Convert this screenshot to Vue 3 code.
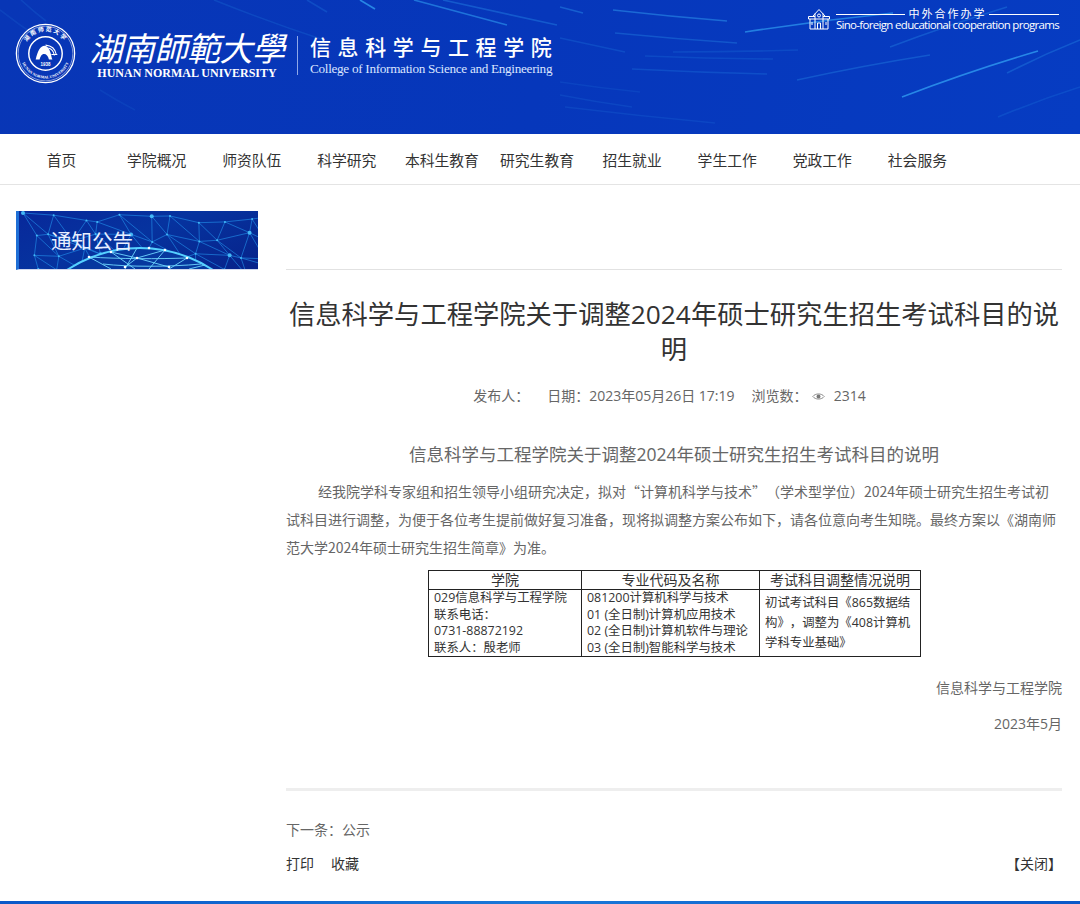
<script setup>
const navItems = ['首页', '学院概况', '师资队伍', '科学研究', '本科生教育', '研究生教育', '招生就业', '学生工作', '党政工作', '社会服务']

// light trails in the header: x1, y1, x2, y2, bend, opacity
const trails = [
  [560, 7, 583, 13, 0, 0.4], [613, 10, 727, 21, 1, 0.5], [745, 32, 893, 13, -2, 0.7],
  [615, 33, 737, 43, 1, 0.3], [560, 38, 625, 52, 0, 0.2], [673, 52, 798, 50, 1, 0.18],
  [645, 56, 773, 59, 1, 0.18], [632, 69, 767, 74, 1, 0.22], [797, 80, 930, 55, -2, 0.3],
  [902, 97, 1038, 51, -3, 0.8], [890, 47, 1007, 7, -2, 0.3], [1007, 73, 1080, 40, -2, 0.3],
  [998, 117, 1080, 87, -2, 0.18], [560, 95, 632, 107, 1, 0.14], [565, 107, 715, 123, 1, 0.14],
  [360, 0, 375, 9, 0, 0.8], [414, 0, 507, 25, 0, 0.6], [443, 0, 557, 25, 0, 0.35],
  [214, 0, 321, 39, 2, 0.18], [307, 0, 327, 12, 0, 0.22], [21, 0, 46, 21, 1, 0.15],
  [0, 10, 36, 36, 1, 0.12], [100, 90, 135, 110, 1, 0.1], [560, 82, 640, 92, 1, 0.12]
]
const trailPaths = trails.map(([x1, y1, x2, y2, b, o]) => ({
  d: `M${x1} ${y1} Q${(x1 + x2) / 2} ${(y1 + y2) / 2 + b} ${x2} ${y2}`,
  o
}))

// mesh of the notice banner, a jittered grid so the points look scattered
const cols = 11
const rows = 4
const nodes = []
for (let r = 0; r < rows; r++) {
  for (let c = 0; c < cols; c++) {
    const a = Math.sin(r * 12.9 + c * 78.2) * 4375.5
    const b = Math.sin(r * 39.3 + c * 11.1) * 2731.7
    nodes.push({
      x: c * 24 + 4 + (a - Math.floor(a)) * 16,
      y: r * 17 + 2 + (b - Math.floor(b)) * 12
    })
  }
}
const links = []
nodes.forEach((n, i) => {
  const right = (i + 1) % cols !== 0 ? nodes[i + 1] : null
  const down = nodes[i + cols]
  const diag = (i + 1) % cols !== 0 ? nodes[i + cols + 1] : null
  ;[right, down, diag].forEach((m) => {
    if (m) links.push({ x1: n.x, y1: n.y, x2: m.x, y2: m.y })
  })
})

// bright points on the globe
const globeDots = [[92, 41], [118, 47], [146, 39], [106, 56], [150, 56], [70, 46], [168, 47], [130, 37]]
</script>

<template>
  <div class="page">
    <header class="top">
      <svg class="trails" viewBox="0 0 1080 134">
        <path v-for="t in trailPaths" :key="t.d" :d="t.d" :opacity="t.o" stroke="#2f9bf0" stroke-width="1.6" fill="none" />
      </svg>
      <div class="brand">
        <svg class="seal" viewBox="0 0 62 62">
          <defs>
            <path id="ring-top" d="M8.5 31 A22.5 22.5 0 0 1 53.5 31" />
            <path id="ring-bottom" d="M5.5 31 A25.5 25.5 0 0 0 56.5 31" />
          </defs>
          <circle cx="31" cy="31" r="29.6" fill="none" stroke="#fff" stroke-width="1.3" />
          <circle cx="31" cy="31" r="27.8" fill="none" stroke="#fff" stroke-width="0.5" />
          <circle cx="31" cy="31" r="17" fill="none" stroke="#fff" stroke-width="1.5" />
          <text class="ring-cn"><textPath href="#ring-top" startOffset="50%" text-anchor="middle">湖南师范大学</textPath></text>
          <text class="ring-en"><textPath href="#ring-bottom" startOffset="50%" text-anchor="middle">HUNAN NORMAL UNIVERSITY</textPath></text>
          <path d="M21 37 C23 28 26 23 30 23 C33 23 35 26 36 30 C37 33 37 35 38 37 L34.5 37 C33.5 33.5 32 31.5 29.5 31.5 C27 31.5 26 34 25 37 Z" fill="#fff" />
          <path d="M31 22.5 C37 23 41 27 42 32 M34 25.5 C37.5 26.5 39.5 29.5 40 33 M37 32 L43 32" fill="none" stroke="#fff" stroke-width="1.1" />
          <text x="31" y="43.5" class="seal-year" text-anchor="middle">1938</text>
        </svg>
        <div class="school">
          <div class="school-cn">湖南師範大學</div>
          <div class="school-en">HUNAN NORMAL UNIVERSITY</div>
        </div>
        <div class="divider"></div>
        <div class="college">
          <div class="college-cn">信息科学与工程学院</div>
          <div class="college-en">College of Information Science and Engineering</div>
        </div>
      </div>
      <div class="sino">
        <svg class="sino-icon" viewBox="0 0 24 22" fill="none" stroke="#fff" stroke-width="1">
          <path d="M6 8 L12 1.5 L18 8" />
          <path d="M1.5 8.5 H8 M16 8.5 H22.5 M1.5 8.5 V11 H22.5 V8.5" />
          <path d="M3 11 V21 H21 V11 M8 5.5 V21 M16 5.5 V21" />
          <circle cx="12" cy="7.5" r="1.5" />
          <path d="M10.5 21 V15 H13.5 V21 M5 14 V17 M19 14 V17" />
        </svg>
        <div>
          <div class="sino-cn"><i></i><span>中外合作办学</span><i></i></div>
          <div class="sino-en">Sino-foreign educational cooperation programs</div>
        </div>
      </div>
    </header>

    <nav class="nav">
      <a v-for="item in navItems" :key="item">{{ item }}</a>
    </nav>

    <div class="body">
      <aside class="side">
        <div class="notice">
          <svg class="mesh" viewBox="0 0 239 58">
            <line v-for="(l, i) in links" :key="i" v-bind="l" stroke="#2494ee" stroke-width="0.6" />
            <circle v-for="(n, i) in nodes" :key="'n' + i" :cx="n.x" :cy="n.y" :r="i % 5 === 0 ? 2 : 1" fill="#44b8f6" />
            <circle cx="121" cy="169" r="132" fill="#06389f" stroke="#55d0ff" stroke-width="2" />
            <path d="M70 46 L92 58 M92 41 L116 58 M118 37 L106 58 M146 39 L130 58 M168 47 L150 58 M186 54 L170 58 M70 46 C100 48 140 48 168 47 M84 53 C110 56 150 56 182 53 M92 41 L118 47 L146 39 M118 47 L150 56 M118 47 L106 56" stroke="#6fd8ff" stroke-width="0.9" fill="none" />
            <circle v-for="d in globeDots" :key="d[0]" :cx="d[0]" :cy="d[1]" r="1.3" fill="#fff" />
          </svg>
          <span>通知公告</span>
        </div>
      </aside>

      <main class="main">
        <h1>信息科学与工程学院关于调整2024年硕士研究生招生考试科目的说明</h1>
        <div class="meta">
          <span class="publisher">发布人：</span>
          <span>日期：2023年05月26日 17:19</span>
          <span class="views">浏览数：
            <svg class="eye" viewBox="0 0 16 10">
              <path d="M1 5 C4 0.8 12 0.8 15 5 C12 9.2 4 9.2 1 5 Z" fill="none" stroke="#777" stroke-width="1" />
              <circle cx="8" cy="5" r="2.4" fill="#777" />
            </svg>
            2314</span>
        </div>

        <h2>信息科学与工程学院关于调整2024年硕士研究生招生考试科目的说明</h2>
        <p class="para">经我院学科专家组和招生领导小组研究决定，拟对“计算机科学与技术”（学术型学位）2024年硕士研究生招生考试初试科目进行调整，为便于各位考生提前做好复习准备，现将拟调整方案公布如下，请各位意向考生知晓。最终方案以《湖南师范大学2024年硕士研究生招生简章》为准。</p>

        <table class="tbl">
          <thead>
            <tr>
              <th class="c1">学院</th>
              <th class="c2">专业代码及名称</th>
              <th class="c3">考试科目调整情况说明</th>
            </tr>
          </thead>
          <tbody>
            <tr>
              <td>029信息科学与工程学院<br />联系电话：<br />0731-88872192<br />联系人：殷老师</td>
              <td>081200计算机科学与技术<br />01 (全日制)计算机应用技术<br />02 (全日制)计算机软件与理论<br />03 (全日制)智能科学与技术</td>
              <td class="note">初试考试科目《865数据结构》，调整为《408计算机学科专业基础》</td>
            </tr>
          </tbody>
        </table>

        <p class="sign first">信息科学与工程学院</p>
        <p class="sign">2023年5月</p>

        <div class="next">下一条：公示</div>
        <div class="actions">
          <div><a>打印</a><a class="fav">收藏</a></div>
          <a class="close">【关闭】</a>
        </div>
      </main>
    </div>
    <div class="bottom"></div>
  </div>
</template>

<style>
html, body {
  margin: 0;
  background: #fff;
}
</style>

<style scoped>
.page {
  width: 1080px;
  height: 904px;
  overflow: hidden;
  font-family: "Open Sans", "Noto Sans CJK SC", sans-serif;
  text-spacing-trim: space-all;
  color: #333;
  display: flex;
  flex-direction: column;
}

/* HEADER */
.top {
  height: 134px;
  flex: none;
  position: relative;
  overflow: hidden;
  background: linear-gradient(100deg, #0836b6 0%, #0637bb 50%, #063cc2 100%);
  color: #fff;
  display: flex;
  justify-content: space-between;
  align-items: flex-start;
}

.trails {
  position: absolute;
  inset: 0;
  width: 100%;
  height: 100%;
  filter: blur(0.6px);
}

.brand {
  position: relative;
  display: flex;
  align-items: center;
  margin: 23px 0 0 15px;
}

.seal {
  width: 61px;
  height: 61px;
  flex: none;
}

.ring-cn {
  font-size: 6px;
  font-weight: 700;
  letter-spacing: 1.6px;
  fill: #fff;
}

.ring-en {
  font-family: "Liberation Serif", serif;
  font-size: 4px;
  font-weight: 700;
  fill: #fff;
}

.seal-year {
  font-family: "Liberation Sans", sans-serif;
  font-size: 4.5px;
  font-weight: 700;
  fill: #fff;
}

.school {
  margin-left: 13px;
  width: 196px;
  text-align: center;
}

.school-cn {
  font-family: "Noto Sans CJK SC", sans-serif;
  font-size: 33px;
  line-height: 40px;
  white-space: nowrap;
  letter-spacing: -0.5px;
  font-style: italic;
}

.school-en {
  font-family: "Liberation Serif", serif;
  font-size: 12px;
  font-weight: 700;
  line-height: 13px;
  white-space: nowrap;
}

.divider {
  width: 1px;
  height: 39px;
  margin: 4px 12px 0 12px;
  background: #8fa8e8;
}

.college {
  align-self: flex-start;
  margin-top: 12px;
}

.college-cn {
  font-size: 21px;
  line-height: 25px;
  letter-spacing: 6.6px;
  font-weight: 500;
  white-space: nowrap;
}

.college-en {
  font-family: "Liberation Serif", serif;
  font-size: 13.2px;
  line-height: 18px;
  color: #dbe5ff;
  white-space: nowrap;
  letter-spacing: -0.3px;
}

.sino {
  position: relative;
  display: flex;
  align-items: flex-end;
  gap: 5px;
  margin: 8px 21px 0 0;
}

.sino-icon {
  width: 24px;
  height: 22px;
}

.sino-cn {
  display: flex;
  align-items: center;
  gap: 3px;
  font-size: 11px;
  line-height: 10px;
  letter-spacing: 2px;
}

.sino-cn i {
  flex: 1;
  height: 1px;
  background: #fff;
}

.sino-en {
  font-family: "Open Sans", sans-serif;
  font-size: 11.5px;
  line-height: 11px;
  letter-spacing: -0.68px;
  white-space: nowrap;
}

/* NAV */
.nav {
  height: 50px;
  flex: none;
  display: flex;
  padding-left: 14px;
  border-bottom: 1px solid #e4e4e4;
}

.nav a {
  width: 95.1px;
  text-align: center;
  font-size: 14.8px;
  line-height: 52px;
  color: #333;
  white-space: nowrap;
}

/* BODY */
.body {
  flex: 1;
  display: flex;
  padding: 26px 18px 0 16px;
  gap: 28px;
}

.side {
  width: 242px;
  flex: none;
}

.notice {
  height: 59px;
  position: relative;
  background: linear-gradient(160deg, #08289a, #06339f 45%, #07228a);
  border-left: 3px solid #1f6fd6;
  border-bottom: 1px solid #cfd8ee;
  box-sizing: border-box;
  overflow: hidden;
}

.mesh {
  position: absolute;
  inset: 0;
  width: 100%;
  height: 100%;
}

.notice span {
  position: absolute;
  left: 32px;
  top: 15px;
  font-size: 20.5px;
  line-height: 30px;
  color: #e8eeff;
}

.main {
  flex: 1;
  min-width: 0;
  padding-top: 58px;
  position: relative;
}

.main::before {
  content: "";
  position: absolute;
  left: 0;
  right: 0;
  top: 58px;
  height: 1px;
  background: #e2e2e2;
}

h1 {
  margin: 0;
  padding-top: 28px;
  font-size: 26.3px;
  line-height: 35px;
  font-weight: 400;
  text-align: center;
  color: #333;
}

.meta {
  margin: 19px 9px 0 0;
  display: flex;
  justify-content: center;
  gap: 17px;
  font-size: 14px;
  line-height: 20px;
  color: #666;
}

.publisher {
  margin-right: 1px;
}

.eye {
  width: 13px;
  height: 9px;
  margin: 0 5px 0 1px;
}

h2 {
  margin: 0;
  padding-top: 35px;
  font-size: 17.5px;
  line-height: 26px;
  font-weight: 400;
  text-align: center;
  color: #666;
}

.para {
  margin: 10px 0 0;
  padding-right: 2px;
  font-family: "Noto Sans CJK SC", sans-serif;
  font-size: 14px;
  line-height: 28px;
  text-indent: 32px;
  color: #666;
}

.tbl {
  width: 493px;
  margin: 9px 0 0 142px;
  border-collapse: collapse;
  table-layout: fixed;
  font-size: 12.4px;
  color: #333;
  border: 1px solid #222;
}

.tbl th,
.tbl td {
  border: 1px solid #222;
  padding: 0 5px;
  font-weight: 400;
}

.tbl th {
  font-size: 14px;
  line-height: 18px;
  text-align: center;
  padding: 0;
  white-space: nowrap;
}

.tbl td {
  line-height: 16.5px;
  white-space: nowrap;
}

.tbl td.note {
  white-space: normal;
  line-height: 20px;
}

.c1 {
  width: 152px;
}

.c2 {
  width: 177px;
}

.sign {
  margin: 0;
  font-size: 14px;
  line-height: 20px;
  text-align: right;
  color: #666;
}

.sign.first {
  margin-top: 21px;
}

.sign + .sign {
  margin-top: 16px;
}

.next {
  margin-top: 54px;
  padding-top: 29px;
  border-top: 3px solid #eee;
  font-size: 14px;
  line-height: 20px;
  color: #666;
}

.actions {
  margin-top: 14px;
  display: flex;
  justify-content: space-between;
  font-size: 14px;
  line-height: 20px;
  color: #333;
}

.fav {
  margin-left: 17px;
}

.bottom {
  height: 3px;
  flex: none;
  background: linear-gradient(90deg, #0a58c8, #1a78d8 50%, #0a58c8);
}
</style>
